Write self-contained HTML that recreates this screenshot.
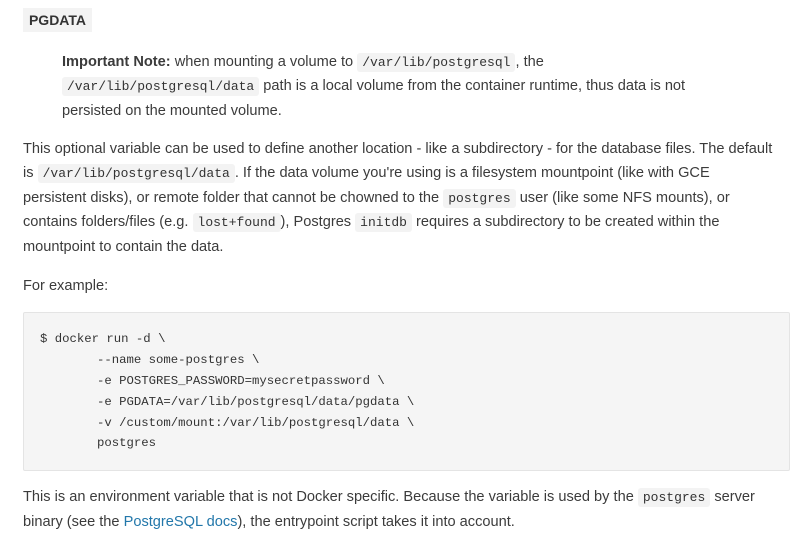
<!DOCTYPE html>
<html><head><meta charset="utf-8"><style>
body{margin:0;background:#fff;color:#3b3b3b;font-family:"Liberation Sans",Arial,sans-serif;font-size:14.6px;width:812px;height:551px;overflow:hidden;position:relative}
.l{position:absolute;white-space:nowrap;line-height:20px}
code{font-family:"Liberation Mono",monospace;font-size:13px;background:#f3f3f3;padding:2px 5px;border-radius:3px;color:#333}
.h{position:absolute;left:23px;top:8px;width:69px;height:24px;background:#f3f3f3;font-weight:bold;font-size:14px;line-height:24px;text-align:center;color:#333}
.pre{position:absolute;left:23px;top:312px;width:765px;height:157px;background:#f5f5f5;border:1px solid #e4e4e4;border-radius:2px}
.c{position:absolute;font-family:"Liberation Mono",monospace;font-size:12.3px;white-space:pre;color:#333;line-height:20px}
a{color:#2277aa;text-decoration:none}
</style></head><body>
<div class="h">PGDATA</div>
<div class="l" style="left:62px;top:52px"><b>Important Note:</b> when mounting a volume to <code>/var/lib/postgresql</code>, the</div>
<div class="l" style="left:62px;top:76px"><code>/var/lib/postgresql/data</code> path is a local volume from the container runtime, thus data is not</div>
<div class="l" style="left:62px;top:101px">persisted on the mounted volume.</div>
<div class="l" style="left:23px;top:139px">This optional variable can be used to define another location - like a subdirectory - for the database files. The default</div>
<div class="l" style="left:23px;top:163px">is <code>/var/lib/postgresql/data</code>. If the data volume you're using is a filesystem mountpoint (like with GCE</div>
<div class="l" style="left:23px;top:188px">persistent disks), or remote folder that cannot be chowned to the <code>postgres</code> user (like some NFS mounts), or</div>
<div class="l" style="left:23px;top:212px">contains folders/files (e.g. <code>lost+found</code>), Postgres <code>initdb</code> requires a subdirectory to be created within the</div>
<div class="l" style="left:23px;top:237px">mountpoint to contain the data.</div>
<div class="l" style="left:23px;top:276px">For example:</div>
<div class="pre"></div>
<div class="c" style="left:40px;top:329px">$ docker run -d \</div>
<div class="c" style="left:97px;top:350px">--name some-postgres \</div>
<div class="c" style="left:97px;top:371px">-e POSTGRES_PASSWORD=mysecretpassword \</div>
<div class="c" style="left:97px;top:392px">-e PGDATA=/var/lib/postgresql/data/pgdata \</div>
<div class="c" style="left:97px;top:413px">-v /custom/mount:/var/lib/postgresql/data \</div>
<div class="c" style="left:97px;top:433px">postgres</div>
<div class="l" style="left:23px;top:487px">This is an environment variable that is not Docker specific. Because the variable is used by the <code>postgres</code> server</div>
<div class="l" style="left:23px;top:512px">binary (see the <a>PostgreSQL docs</a>), the entrypoint script takes it into account.</div>
</body></html>
